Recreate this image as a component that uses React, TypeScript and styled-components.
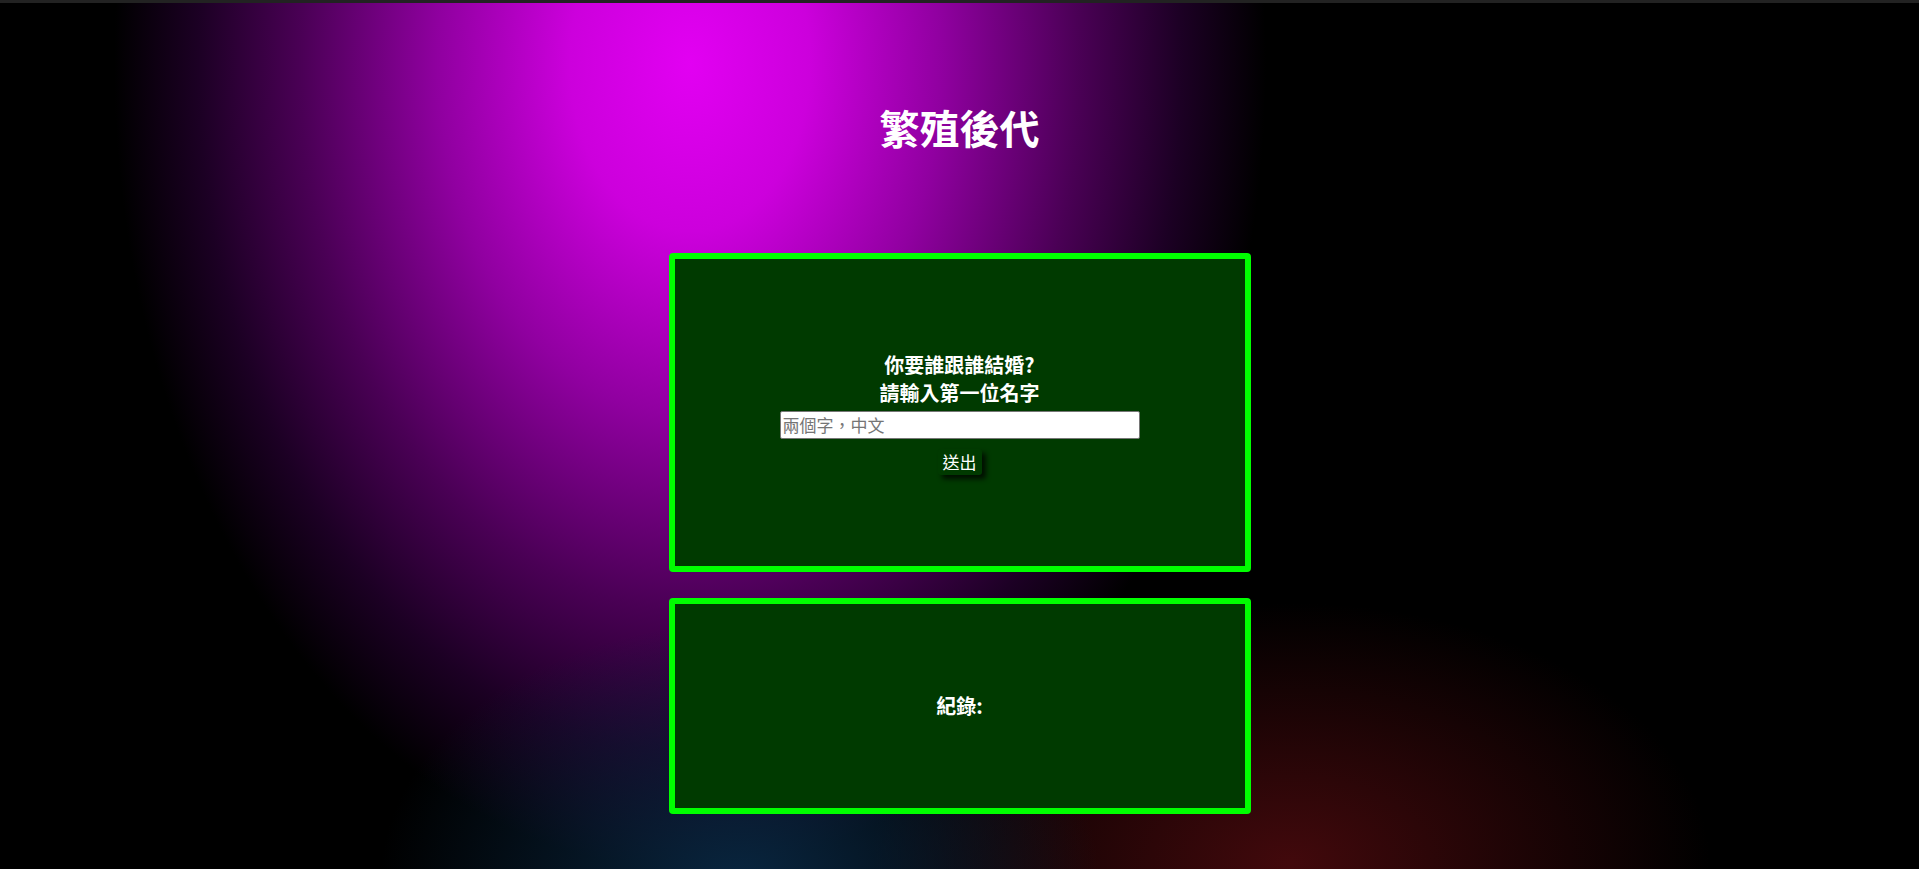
import styled, { createGlobalStyle } from "styled-components";

const GlobalStyle = createGlobalStyle`
  html, body {
    margin: 0;
    padding: 0;
    background: #000;
  }
  body {
    font-family: "Noto Sans CJK TC", "Noto Sans", sans-serif;
    color: #fff;
  }
`;

const Page = styled.div`
  min-height: 100vh;
  box-sizing: border-box;
  border-top: 3px solid #222;
  display: flex;
  flex-direction: column;
  align-items: center;
  background:
    radial-gradient(ellipse 360px 260px at 740px 880px, rgba(9, 38, 64, 1) 0%, rgba(9, 38, 64, 0.6) 40%, rgba(0, 0, 0, 0) 100%),
    radial-gradient(ellipse 420px 260px at 1290px 860px, rgba(66, 9, 12, 1) 0%, rgba(66, 9, 12, 0.6) 40%, rgba(0, 0, 0, 0) 100%),
    radial-gradient(ellipse 600px 840px at 690px 60px, #e200f2 0%, #cc00dc 20%, #9000a0 42%, #4a0055 65%, #1c0024 82%, rgba(0, 0, 0, 0) 96%),
    #000;
`;

const Title = styled.h1`
  margin: 100px 0 0;
  font-size: 40px;
  line-height: 48px;
  font-weight: 700;
`;

const Card = styled.section<{ $height: number }>`
  box-sizing: border-box;
  width: 582px;
  height: ${(p) => p.$height}px;
  border: 6px solid #00ff00;
  border-radius: 4px;
  background: #003a00;
  display: flex;
  flex-direction: column;
  align-items: center;
  justify-content: center;
`;

const FormCard = styled(Card)`
  margin-top: 102px;
`;

const LogCard = styled(Card)`
  margin-top: 26px;
`;

const Label = styled.div`
  font-size: 20px;
  line-height: 28px;
  font-weight: 700;
`;

const NameInput = styled.input`
  box-sizing: border-box;
  width: 360px;
  height: 28px;
  margin-top: 4px;
  padding: 1px 2px;
  border: 1px solid #767676;
  border-radius: 2px;
  background: #fff;
  font-family: inherit;
  font-size: 17px;
  color: #000;
  outline: none;
  &::placeholder {
    color: #757575;
  }
`;

const SendButton = styled.button`
  margin-top: 10px;
  padding: 0 5px;
  height: 26px;
  border: none;
  border-radius: 3px;
  background: #003a00;
  color: #fff;
  font-family: inherit;
  font-size: 17px;
  line-height: 26px;
  box-shadow: 4px 4px 5px rgba(0, 0, 0, 0.75);
  cursor: pointer;
`;

export default function App() {
  return (
    <>
      <GlobalStyle />
      <Page>
        <Title>繁殖後代</Title>
        <FormCard $height={319}>
          <Label>你要誰跟誰結婚?</Label>
          <Label>請輸入第一位名字</Label>
          <NameInput placeholder="兩個字，中文" />
          <SendButton>送出</SendButton>
        </FormCard>
        <LogCard $height={216}>
          <Label>紀錄:</Label>
        </LogCard>
      </Page>
    </>
  );
}
